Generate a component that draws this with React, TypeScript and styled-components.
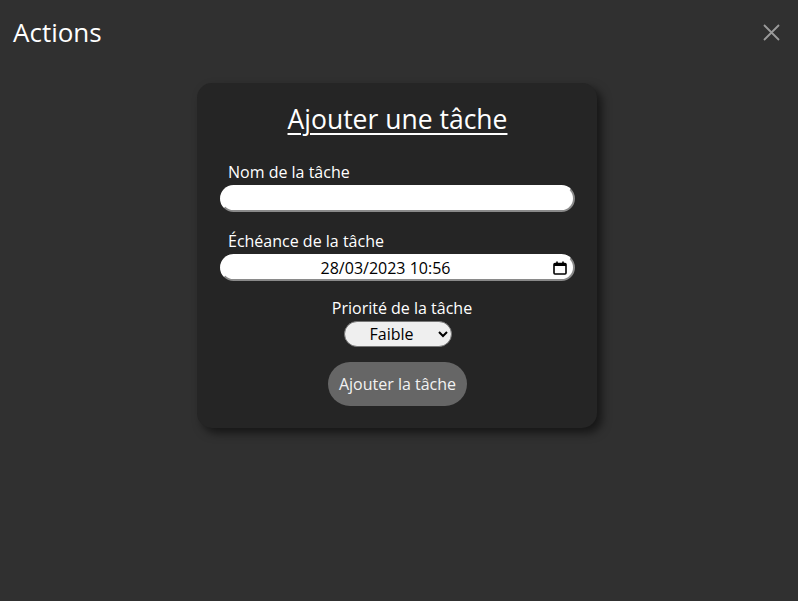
import React from "react";
import styled, { createGlobalStyle } from "styled-components";

const Global = createGlobalStyle`
  html, body {
    margin: 0;
    padding: 0;
    background: #303030;
    font-family: "Open Sans", "Noto Sans", sans-serif;
    color: #ffffff;
  }
  * { box-sizing: border-box; }
`;

const Page = styled.div`
  width: 798px;
  height: 601px;
  background: #303030;
  display: flex;
  flex-direction: column;
  overflow: hidden;
`;

const Header = styled.header`
  display: flex;
  justify-content: space-between;
  align-items: center;
  padding: 14px 17px 0 13px;
  height: 50px;
`;

const Title = styled.h1`
  margin: 0;
  font-size: 26px;
  font-weight: 400;
  line-height: 36px;
  color: #ffffff;
`;

const CloseButton = styled.button`
  background: none;
  border: none;
  padding: 0;
  width: 20px;
  height: 20px;
  display: flex;
  align-items: center;
  justify-content: center;
  cursor: pointer;
`;

const Main = styled.main`
  display: flex;
  justify-content: center;
  padding-top: 33px;
  padding-right: 4px;
`;

const Card = styled.form`
  width: 400px;
  background: #252525;
  border-radius: 15px;
  box-shadow: 5px 5px 10px rgba(0, 0, 0, 0.55);
  padding: 18px 22px 22px 23px;
  display: flex;
  flex-direction: column;
`;

const CardTitle = styled.h2`
  margin: 0 0 24px;
  text-align: center;
  font-size: 26.5px;
  font-weight: 400;
  line-height: 36px;
  text-decoration: underline;
  text-underline-offset: 4px;
  text-decoration-thickness: 2px;
  color: #ffffff;
`;

const Field = styled.div<{ $center?: boolean; $gap: number }>`
  display: flex;
  flex-direction: column;
  align-items: ${(p) => (p.$center ? "center" : "stretch")};
  margin-bottom: ${(p) => p.$gap}px;
`;

const Label = styled.label<{ $center?: boolean }>`
  font-size: 16px;
  line-height: 22px;
  color: #ffffff;
  padding-left: ${(p) => (p.$center ? "9px" : "8px")};
  margin-bottom: 2px;
`;

const TextInput = styled.input`
  width: 100%;
  height: 27px;
  border-radius: 14px;
  border-style: solid;
  border-width: 2px;
  border-color: #ffffff #8a8a8a #8a8a8a #ffffff;
  background: #ffffff;
  font-family: "Open Sans", sans-serif;
  font-size: 16px;
  padding: 0 10px;
  outline: none;
`;

const DateField = styled.div`
  width: 100%;
  height: 27px;
  border-radius: 14px;
  border-style: solid;
  border-width: 2px;
  border-color: #ffffff #8a8a8a #8a8a8a #ffffff;
  background: #ffffff;
  display: flex;
  align-items: center;
  padding: 0 6px 0 10px;
`;

const DateText = styled.span`
  flex: 1;
  text-align: center;
  font-family: "Open Sans", sans-serif;
  font-size: 16px;
  color: #000000;
  padding-right: 14px;
  line-height: 22px;
`;

const Select = styled.select`
  width: 108px;
  height: 26px;
  border-radius: 13px;
  border: 1px solid #767676;
  background: #efefef;
  font-family: "Open Sans", sans-serif;
  font-size: 16px;
  color: #000;
  text-align: center;
  text-align-last: center;
  padding: 0 4px;
`;

const SubmitButton = styled.button`
  align-self: center;
  width: 139px;
  height: 44px;
  border: none;
  border-radius: 22px;
  background: #666666;
  color: #f2f2f2;
  font-family: "Open Sans", sans-serif;
  font-size: 16px;
  cursor: pointer;
`;

const CalendarIcon = () => (
  <svg width="14" height="14" viewBox="0 0 14 14" fill="none">
    <rect x="1" y="2.5" width="12" height="10.5" rx="1" stroke="#000" strokeWidth="1.6" />
    <rect x="1" y="2.5" width="12" height="2.5" fill="#000" />
    <line x1="4" y1="0.5" x2="4" y2="3" stroke="#000" strokeWidth="1.6" />
    <line x1="10" y1="0.5" x2="10" y2="3" stroke="#000" strokeWidth="1.6" />
  </svg>
);

const CloseIcon = () => (
  <svg width="17" height="17" viewBox="0 0 17 17">
    <path d="M1 1 L16 16 M16 1 L1 16" stroke="#9a9a9a" strokeWidth="1.8" />
  </svg>
);

export default function App() {
  return (
    <>
      <Global />
      <Page>
        <Header>
          <Title>Actions</Title>
          <CloseButton type="button" aria-label="Fermer">
            <CloseIcon />
          </CloseButton>
        </Header>
        <Main>
          <Card onSubmit={(e) => e.preventDefault()}>
            <CardTitle>Ajouter une tâche</CardTitle>
            <Field $gap={18}>
              <Label htmlFor="nom">Nom de la tâche</Label>
              <TextInput id="nom" type="text" />
            </Field>
            <Field $gap={16}>
              <Label>Échéance de la tâche</Label>
              <DateField>
                <DateText>28/03/2023 10:56</DateText>
                <CalendarIcon />
              </DateField>
            </Field>
            <Field $center $gap={15}>
              <Label $center htmlFor="prio">Priorité de la tâche</Label>
              <Select id="prio" defaultValue="faible">
                <option value="faible">Faible</option>
                <option value="moyenne">Moyenne</option>
                <option value="haute">Haute</option>
              </Select>
            </Field>
            <SubmitButton type="submit">Ajouter la tâche</SubmitButton>
          </Card>
        </Main>
      </Page>
    </>
  );
}
